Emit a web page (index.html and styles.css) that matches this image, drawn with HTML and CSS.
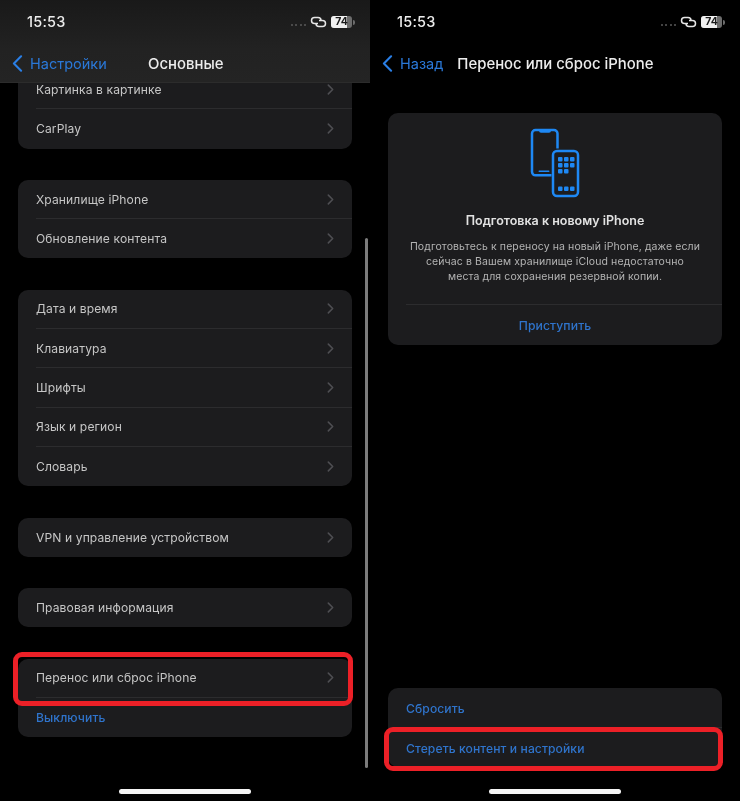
FILE: index.html
```html
<!DOCTYPE html>
<html lang="ru">
<head>
<meta charset="utf-8">
<title>Перенос или сброс iPhone</title>
<link rel="stylesheet" href="styles.css">
</head>
<body>
<svg class="defs" width="0" height="0" aria-hidden="true">
  <symbol id="chev" viewBox="0 0 8 12"><path d="M1.500 1l5 5-5 5" fill="none" stroke="currentColor" stroke-width="1.800" stroke-linecap="round" stroke-linejoin="round"/></symbol>
  <symbol id="back" viewBox="0 0 12 19"><path d="M10 1.500L2 9.500l8 8" fill="none" stroke="currentColor" stroke-width="2.300" stroke-linecap="round" stroke-linejoin="round"/></symbol>
  <symbol id="link" viewBox="0 0 17 12"><g fill="none" stroke="currentColor" stroke-width="1.500"><path d="M8 7.500H4.500a3 3 0 0 1 0-6H8a3 3 0 0 1 3 3"/><path d="M9 4.500h3.500a3 3 0 0 1 0 6H9a3 3 0 0 1-3-3"/></g></symbol>
</svg>

<main class="screens">
  <section class="screen screen-left">
    <header class="top top-tinted">
      <div class="status">
        <span class="time">15:53</span>
        <span class="status-right">
          <span class="dots"><i></i><i></i><i></i><i></i></span>
          <svg class="link"><use href="#link"/></svg>
          <span class="battery"><span class="battery-fill"></span><span class="battery-num">74</span></span>
          <span class="battery-cap"></span>
        </span>
      </div>
      <nav class="nav">
        <a class="back"><svg class="back-ico"><use href="#back"/></svg>Настройки</a>
        <h1 class="title title-center">Основные</h1>
      </nav>
    </header>
    <div class="scroll">
      <div class="scroll-inner">
        <div class="card">
          <div class="row"><span>Картинка в картинке</span><svg class="chev"><use href="#chev"/></svg></div>
          <div class="row"><span>CarPlay</span><svg class="chev"><use href="#chev"/></svg></div>
        </div>
        <div class="card">
          <div class="row"><span>Хранилище iPhone</span><svg class="chev"><use href="#chev"/></svg></div>
          <div class="row"><span>Обновление контента</span><svg class="chev"><use href="#chev"/></svg></div>
        </div>
        <div class="card">
          <div class="row"><span>Дата и время</span><svg class="chev"><use href="#chev"/></svg></div>
          <div class="row"><span>Клавиатура</span><svg class="chev"><use href="#chev"/></svg></div>
          <div class="row"><span>Шрифты</span><svg class="chev"><use href="#chev"/></svg></div>
          <div class="row"><span>Язык и регион</span><svg class="chev"><use href="#chev"/></svg></div>
          <div class="row"><span>Словарь</span><svg class="chev"><use href="#chev"/></svg></div>
        </div>
        <div class="card">
          <div class="row"><span>VPN и управление устройством</span><svg class="chev"><use href="#chev"/></svg></div>
        </div>
        <div class="card">
          <div class="row"><span>Правовая информация</span><svg class="chev"><use href="#chev"/></svg></div>
        </div>
        <div class="card">
          <div class="row row-marked"><span>Перенос или сброс iPhone</span><svg class="chev"><use href="#chev"/></svg><div class="mark mark-left"></div></div>
          <div class="row link-row"><span>Выключить</span></div>
        </div>
      </div>
      <div class="scrollbar"></div>
    </div>
    <div class="home"></div>
  </section>

  <section class="screen screen-right">
    <header class="top">
      <div class="status">
        <span class="time">15:53</span>
        <span class="status-right">
          <span class="dots"><i></i><i></i><i></i><i></i></span>
          <svg class="link"><use href="#link"/></svg>
          <span class="battery"><span class="battery-fill"></span><span class="battery-num">74</span></span>
          <span class="battery-cap"></span>
        </span>
      </div>
      <nav class="nav">
        <a class="back"><svg class="back-ico"><use href="#back"/></svg>Назад</a>
        <h1 class="title title-after">Перенос или сброс iPhone</h1>
      </nav>
    </header>
    <div class="detail">
      <div class="promo">
        <svg class="phones" viewBox="0 0 50 70" fill="none">
          <path d="M21.500 47.300H5.500a3.500 3.500 0 0 1-3.500-3.500V5.500A3.500 3.500 0 0 1 5.500 2h18.500a3.500 3.500 0 0 1 3.500 3.500v15" stroke="#1e88f4" stroke-width="2.500"/>
          <path d="M9 2h12v.8a2 2 0 0 1-2 2h-8a2 2 0 0 1-2-2z" fill="#1e88f4"/>
          <rect x="8.500" y="42.500" width="11" height="1.500" rx=".7" fill="#1e88f4"/>
          <rect x="23" y="23" width="25" height="45" rx="4" stroke="#1e88f4" stroke-width="2.500"/>
          <g fill="#1e88f4">
            <rect x="28" y="29" width="4.500" height="4.500" rx="1"/><rect x="34" y="29" width="4.500" height="4.500" rx="1"/><rect x="40" y="29" width="4.500" height="4.500" rx="1"/>
            <rect x="28" y="35" width="4.500" height="4.500" rx="1"/><rect x="34" y="35" width="4.500" height="4.500" rx="1"/><rect x="40" y="35" width="4.500" height="4.500" rx="1"/>
            <rect x="28" y="41" width="4.500" height="4.500" rx="1"/><rect x="34" y="41" width="4.500" height="4.500" rx="1"/>
            <rect x="28" y="58.500" width="4.500" height="4.500" rx="1"/><rect x="34" y="58.500" width="4.500" height="4.500" rx="1"/><rect x="40" y="58.500" width="4.500" height="4.500" rx="1"/>
          </g>
        </svg>
        <h2 class="promo-title">Подготовка к новому iPhone</h2>
        <p class="promo-text">Подготовьтесь к переносу на новый iPhone, даже если<br>сейчас в Вашем хранилище iCloud недостаточно<br>места для сохранения резервной копии.</p>
        <div class="promo-action">Приступить</div>
      </div>
      <div class="card card-bottom">
        <div class="row link-row"><span>Сбросить</span></div>
        <div class="row link-row row-marked"><span>Стереть контент и настройки</span><div class="mark mark-right"></div></div>
      </div>
    </div>
    <div class="home"></div>
  </section>
</main>
</body>
</html>
```

FILE: styles.css
```css
* { box-sizing: border-box; }
html, body { margin: 0; padding: 0; background: #000; }
body { font-family: Inter, "Liberation Sans", sans-serif; color: #e6e6e6; overflow: hidden; }
.defs { position: absolute; }

.screens { display: flex; width: 740px; height: 801px; filter: blur(.3px); }
.screen { position: relative; width: 370px; height: 801px; display: flex; flex-direction: column; background: #000; overflow: hidden; }

.top { height: 83px; flex: none; position: relative; z-index: 2; background: #000; }
.top-tinted { background: linear-gradient(#191919, #222 60%, #242424); border-bottom: 1px solid #2c2c2c; }

.status { height: 44px; padding: 13px 15px 0 27px; display: flex; justify-content: space-between; align-items: flex-start; }
.time { font-size: 14.500px; line-height: 18px; font-weight: 500; color: #ececec; letter-spacing: .2px; }
.status-right { display: flex; align-items: center; height: 18px; }
.dots { display: flex; gap: 2.500px; margin: 5px 4px 0 0; }
.dots i { width: 2px; height: 2px; border-radius: 50%; background: #5a5a5a; }
.link { width: 17px; height: 12px; color: #e6e6e6; margin-right: 4px; }
.battery { position: relative; width: 21px; height: 12px; border-radius: 3px; background: #6d6d6d; overflow: hidden; display: flex; align-items: center; justify-content: center; }
.battery-fill { position: absolute; left: 0; top: 0; bottom: 0; width: 74%; background: #f0f0f0; }
.battery-num { position: relative; font-size: 10.500px; font-weight: 700; color: #1a1a1a; line-height: 12px; }
.battery-cap { width: 2px; height: 5px; margin-left: 1px; border-radius: 0 2px 2px 0; background: #6d6d6d; }

.nav { position: relative; height: 39px; display: flex; align-items: center; padding-left: 12px; }
.back { display: flex; align-items: center; gap: 7px; font-size: 14.500px; color: #2a78d8; }
.back-ico { width: 11px; height: 17px; color: #2a7fe6; }
.title { margin: 0; font-size: 14.900px; font-weight: 500; color: #ececec; }
.title-center { position: absolute; left: 148px; }
.title-after { margin-left: 14px; }

.scroll { flex: 1; min-height: 0; position: relative; overflow: hidden; }
.scroll-inner { margin-top: -13px; padding: 0 18px; display: flex; flex-direction: column; gap: 31.300px; }
.scrollbar { position: absolute; left: 365px; top: 155px; width: 3px; height: 530px; border-radius: 2px; background: #7c7c7c; }

.card { position: relative; background: #1c1c1e; border-radius: 10px; }
.row { position: relative; height: 39.300px; margin-left: 18px; padding: 0 18px 0 0; display: flex; align-items: center; justify-content: space-between; font-size: 12.100px; line-height: 13px; color: #c6c6c6; letter-spacing: .1px; border-bottom: 1px solid #2c2c2e; }
.row:last-child { border-bottom: 0; }
.chev { width: 7px; height: 11px; color: #4e4e52; }
.link-row { color: #2f74cc; font-weight: 500; }
.card-bottom .row { padding-top: 2px; }

.mark { position: absolute; border: 5px solid #ec2027; border-radius: 9px; pointer-events: none; }
.mark-left { left: -23px; right: -1px; top: -7px; bottom: -9px; }
.mark-right { left: -22px; right: -1px; top: -1px; bottom: -4px; }

.detail { flex: 1; min-height: 0; display: flex; flex-direction: column; justify-content: space-between; padding: 30px 18px 34px; }
.promo { height: 232px; background: #1c1c1e; border-radius: 10px; display: flex; flex-direction: column; align-items: center; padding-top: 15px; }
.phones { width: 50px; height: 70px; }
.promo-title { margin: 14px 0 0; font-size: 12.500px; line-height: 18px; font-weight: 600; color: #e2e2e2; letter-spacing: 0; }
.promo-text { margin: 9px 0 0; font-size: 10.500px; line-height: 15px; color: #b4b4b4; text-align: center; letter-spacing: .1px; }
.promo-action { align-self: stretch; margin: 20px 0 0 18px; padding: 12px 18px 0 0; border-top: 1px solid #2c2c2e; text-align: center; font-size: 12.200px; line-height: 18px; font-weight: 500; color: #2f74cc; letter-spacing: .1px; }

.home { position: absolute; left: 119px; bottom: 7px; width: 132px; height: 5px; border-radius: 3px; background: #f4f4f4; z-index: 3; }
```
